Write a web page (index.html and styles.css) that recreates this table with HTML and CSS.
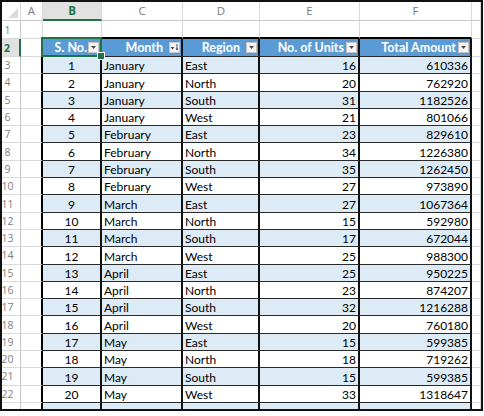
FILE: index.html
```html
<!DOCTYPE html>
<html>
<head>
<meta charset="utf-8">
<link rel="stylesheet" href="styles.css">
</head>
<body>
<div class="frame">
  <div class="row colhdr">
    <div class="c rh corner"><span class="tri"></span></div>
    <div class="c ca">A</div>
    <div class="c cb sel">B</div>
    <div class="c cc">C</div>
    <div class="c cd">D</div>
    <div class="c ce">E</div>
    <div class="c cf">F</div>
    <div class="c cg"></div>
  </div>
  <div class="row r18 pre">
    <div class="c rh">1</div>
    <div class="c ca"></div>
    <div class="c cb"></div>
    <div class="c cc"></div>
    <div class="c cd"></div>
    <div class="c ce"></div>
    <div class="c cf"></div>
    <div class="c cg"></div>
  </div>
  <div class="row r18 thead">
    <div class="c rh sel">2</div>
    <div class="c ca"></div>
    <div class="c cb h active"><span class="ht">S. No.</span><span class="dd"><svg width="11" height="11" viewBox="0 0 11 11"><path d="M3 4h5l-2.5 3z" fill="#4a4a4a"/></svg></span></div>
    <div class="c cc h hc"><span class="ht">Month</span><span class="dd"><svg width="11" height="11" viewBox="0 0 11 11"><path d="M1.5 5h4l-2 2.5z" fill="#4a4a4a"/><path d="M8 2v6" stroke="#4a4a4a" stroke-width="1"/><path d="M6.5 6.5h3l-1.5 2z" fill="#4a4a4a"/></svg></span></div>
    <div class="c cd h hd"><span class="ht">Region</span><span class="dd"><svg width="11" height="11" viewBox="0 0 11 11"><path d="M3 4h5l-2.5 3z" fill="#4a4a4a"/></svg></span></div>
    <div class="c ce h he"><span class="ht">No. of Units</span><span class="dd"><svg width="11" height="11" viewBox="0 0 11 11"><path d="M3 4h5l-2.5 3z" fill="#4a4a4a"/></svg></span></div>
    <div class="c cf h he"><span class="ht">Total Amount</span><span class="dd"><svg width="11" height="11" viewBox="0 0 11 11"><path d="M3 4h5l-2.5 3z" fill="#4a4a4a"/></svg></span></div>
    <div class="c cg"></div>
  </div>

  <div class="row t band"><div class="c rh">3</div><div class="c ca"></div><div class="c cb n">1</div><div class="c cc">January</div><div class="c cd">East</div><div class="c ce r">16</div><div class="c cf r">610336</div><div class="c cg"></div></div>
  <div class="row t"><div class="c rh">4</div><div class="c ca"></div><div class="c cb n">2</div><div class="c cc">January</div><div class="c cd">North</div><div class="c ce r">20</div><div class="c cf r">762920</div><div class="c cg"></div></div>
  <div class="row t band"><div class="c rh">5</div><div class="c ca"></div><div class="c cb n">3</div><div class="c cc">January</div><div class="c cd">South</div><div class="c ce r">31</div><div class="c cf r">1182526</div><div class="c cg"></div></div>
  <div class="row t"><div class="c rh">6</div><div class="c ca"></div><div class="c cb n">4</div><div class="c cc">January</div><div class="c cd">West</div><div class="c ce r">21</div><div class="c cf r">801066</div><div class="c cg"></div></div>
  <div class="row t band"><div class="c rh">7</div><div class="c ca"></div><div class="c cb n">5</div><div class="c cc">February</div><div class="c cd">East</div><div class="c ce r">23</div><div class="c cf r">829610</div><div class="c cg"></div></div>
  <div class="row t"><div class="c rh">8</div><div class="c ca"></div><div class="c cb n">6</div><div class="c cc">February</div><div class="c cd">North</div><div class="c ce r">34</div><div class="c cf r">1226380</div><div class="c cg"></div></div>
  <div class="row t band"><div class="c rh">9</div><div class="c ca"></div><div class="c cb n">7</div><div class="c cc">February</div><div class="c cd">South</div><div class="c ce r">35</div><div class="c cf r">1262450</div><div class="c cg"></div></div>
  <div class="row t"><div class="c rh">10</div><div class="c ca"></div><div class="c cb n">8</div><div class="c cc">February</div><div class="c cd">West</div><div class="c ce r">27</div><div class="c cf r">973890</div><div class="c cg"></div></div>
  <div class="row t band"><div class="c rh">11</div><div class="c ca"></div><div class="c cb n">9</div><div class="c cc">March</div><div class="c cd">East</div><div class="c ce r">27</div><div class="c cf r">1067364</div><div class="c cg"></div></div>
  <div class="row t"><div class="c rh">12</div><div class="c ca"></div><div class="c cb n">10</div><div class="c cc">March</div><div class="c cd">North</div><div class="c ce r">15</div><div class="c cf r">592980</div><div class="c cg"></div></div>
  <div class="row t band"><div class="c rh">13</div><div class="c ca"></div><div class="c cb n">11</div><div class="c cc">March</div><div class="c cd">South</div><div class="c ce r">17</div><div class="c cf r">672044</div><div class="c cg"></div></div>
  <div class="row t"><div class="c rh">14</div><div class="c ca"></div><div class="c cb n">12</div><div class="c cc">March</div><div class="c cd">West</div><div class="c ce r">25</div><div class="c cf r">988300</div><div class="c cg"></div></div>
  <div class="row t band"><div class="c rh">15</div><div class="c ca"></div><div class="c cb n">13</div><div class="c cc">April</div><div class="c cd">East</div><div class="c ce r">25</div><div class="c cf r">950225</div><div class="c cg"></div></div>
  <div class="row t"><div class="c rh">16</div><div class="c ca"></div><div class="c cb n">14</div><div class="c cc">April</div><div class="c cd">North</div><div class="c ce r">23</div><div class="c cf r">874207</div><div class="c cg"></div></div>
  <div class="row t band"><div class="c rh">17</div><div class="c ca"></div><div class="c cb n">15</div><div class="c cc">April</div><div class="c cd">South</div><div class="c ce r">32</div><div class="c cf r">1216288</div><div class="c cg"></div></div>
  <div class="row t"><div class="c rh">18</div><div class="c ca"></div><div class="c cb n">16</div><div class="c cc">April</div><div class="c cd">West</div><div class="c ce r">20</div><div class="c cf r">760180</div><div class="c cg"></div></div>
  <div class="row t band"><div class="c rh">19</div><div class="c ca"></div><div class="c cb n">17</div><div class="c cc">May</div><div class="c cd">East</div><div class="c ce r">15</div><div class="c cf r">599385</div><div class="c cg"></div></div>
  <div class="row t"><div class="c rh">20</div><div class="c ca"></div><div class="c cb n">18</div><div class="c cc">May</div><div class="c cd">North</div><div class="c ce r">18</div><div class="c cf r">719262</div><div class="c cg"></div></div>
  <div class="row t band"><div class="c rh">21</div><div class="c ca"></div><div class="c cb n">19</div><div class="c cc">May</div><div class="c cd">South</div><div class="c ce r">15</div><div class="c cf r">599385</div><div class="c cg"></div></div>
  <div class="row t"><div class="c rh">22</div><div class="c ca"></div><div class="c cb n">20</div><div class="c cc">May</div><div class="c cd">West</div><div class="c ce r">33</div><div class="c cf r">1318647</div><div class="c cg"></div></div>
  <div class="row t band"><div class="c rh"></div><div class="c ca"></div><div class="c cb n"></div><div class="c cc"></div><div class="c cd"></div><div class="c ce r"></div><div class="c cf r"></div><div class="c cg"></div></div>
</div>
</body>
</html>
```
FILE: styles.css
```css
* { box-sizing: border-box; margin: 0; padding: 0; }
body { margin: 0; background: #fff; font-family: Lato, "Liberation Sans", sans-serif; color: #000; }

.frame {
  width: 483px;
  height: 411px;
  border: 2px solid #111;
  overflow: hidden;
  background: #fff;
}

.row { display: flex; height: 17.3px; }
.row.colhdr { height: 19px; }
.row.r18 { height: 18px; }

.c {
  flex: none;
  height: 100%;
  border-right: 1px solid #d9d9d9;
  border-bottom: 1px solid #d9d9d9;
  display: flex;
  align-items: flex-end;
  font-size: 12px;
  line-height: 14px;
  white-space: nowrap;
  overflow: hidden;
  padding: 0 2px;
}

.rh { width: 19px; }
.ca { width: 22px; }
.cb { width: 59px; }
.cc { width: 81px; }
.cd { width: 77px; }
.ce { width: 100px; }
.cf { width: 112px; }
.cg { width: 9px; }

/* column header row */
.colhdr .c {
  align-items: center;
  justify-content: center;
  font-family: "Open Sans", "Noto Sans", sans-serif;
  font-size: 11.5px;
  color: #7a7a7a;
  border-bottom: 1px solid #c8c8c8;
  border-right: 1px solid #dadada;
}
.colhdr .c.sel {
  background: #e1e1e1;
  color: #217346;
  font-weight: 700;
  border-bottom: 2px solid #217346;
}
.corner { position: relative; }
.tri {
  position: absolute;
  right: 2px;
  bottom: 2px;
  width: 0;
  height: 0;
  border-left: 10px solid transparent;
  border-bottom: 10px solid #dcdcdc;
}

/* row headers */
.rh {
  justify-content: center;
  align-items: center;
  padding: 0 7px 0 0;
  font-family: "Open Sans", "Noto Sans", sans-serif;
  font-size: 10.5px;
  color: #808080;
  border-right: 1px solid #c8c8c8;
}
.rh.sel {
  background: #e1e1e1;
  color: #217346;
  font-weight: 700;
  border-right: 2px solid #217346;
}

/* table top edge */
.pre .cb, .pre .cc, .pre .cd, .pre .ce, .pre .cf { border-bottom: 2px solid #000; }

/* table body borders */
.thead .ca, .t .ca { border-right: 2px solid #000; }
.thead .cb, .thead .cc, .thead .cd, .thead .ce, .thead .cf,
.t .cb, .t .cc, .t .cd, .t .ce, .t .cf {
  border-right: 2px solid #111;
  border-bottom: 1px solid #2a2a2a;
}
.band .cb, .band .cc, .band .cd, .band .ce, .band .cf { background: #ddebf7; }

.n { justify-content: center; }
.r { justify-content: flex-end; }

/* header cells */
.h {
  background: #5b9bd5;
  color: #fff;
  font-weight: 700;
  font-size: 12.5px;
  align-items: center;
  justify-content: flex-end;
  gap: 1px;
  padding: 0 1px 0 2px;
}
.hc, .hd { gap: 6px; }
.he { gap: 2px; }
.ht { line-height: 14px; }
.dd {
  display: block;
  width: 11px;
  height: 11px;
  background: #f4f4f4;
  border: 1px solid #c4c4c4;
  flex: none;
}
.dd svg { display: block; margin: -1px; }

.active { position: relative; overflow: visible; }
.active::after {
  content: "";
  position: absolute;
  left: -2px;
  top: -2px;
  right: -2px;
  bottom: -1px;
  border: 2px solid #217346;
  pointer-events: none;
}
.active::before {
  content: "";
  position: absolute;
  right: -5px;
  bottom: -4px;
  width: 6px;
  height: 6px;
  background: #217346;
  border: 1px solid #fff;
  z-index: 2;
}
```
